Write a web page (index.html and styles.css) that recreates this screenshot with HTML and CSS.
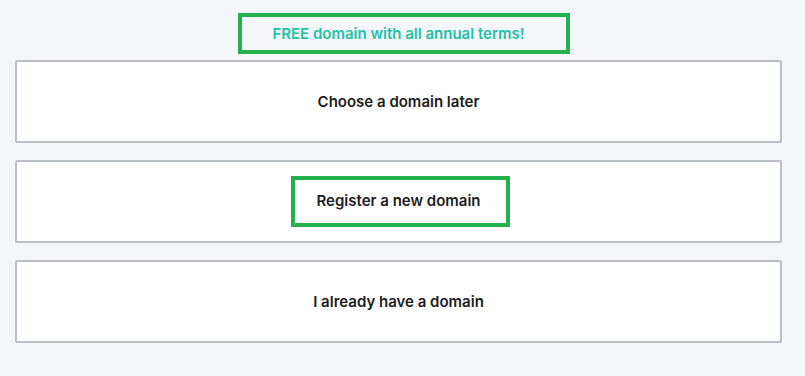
FILE: index.html
```html
<!DOCTYPE html>
<html>
<head>
    <title>Choose a domain</title>
    <link rel="stylesheet" href="styles.css">
</head>
<body>
    <div class="domain-options">
        <div class="promo">
            <span class="promo-text highlight">FREE domain with all annual terms!</span>
        </div>

        <div class="option-card">
            <span class="option-label">Choose a domain later</span>
        </div>

        <div class="option-card">
            <span class="option-label highlight">Register a new domain</span>
        </div>

        <div class="option-card">
            <span class="option-label">I already have a domain</span>
        </div>
    </div>
</body>
</html>
```

FILE: styles.css
```css
/* Opciones de dominio */
body {
    font-family: Inter, "Open Sans", Arial, sans-serif;
    margin: 0;
    background-color: #f4f6fa;
}

.domain-options {
    width: 767px;
    margin-left: 15px;
    padding-top: 13px;
}

.promo {
    display: flex;
    justify-content: center;
    margin-bottom: 6px;
    padding-left: 10px;
}

.promo-text {
    color: #1fc3a6;
    font-weight: 600;
    font-size: 15px;
    width: 314px;
    height: 33px;
    display: flex;
    align-items: center;
    justify-content: center;
    padding-right: 10px;
    box-sizing: content-box;
}

.highlight {
    border: 4px solid #22b14c;
}

.option-card {
    height: 79px;
    background-color: #fff;
    border: 2px solid #b9bfc4;
    border-radius: 2px;
    display: flex;
    align-items: center;
    justify-content: center;
    margin-bottom: 17px;
}

.option-label {
    color: #1c1c1c;
    font-weight: 600;
    font-size: 15px;
    line-height: 17px;
}

.option-label.highlight {
    padding: 12px 25px 14px 21px;
    margin-left: 4px;
}
```
